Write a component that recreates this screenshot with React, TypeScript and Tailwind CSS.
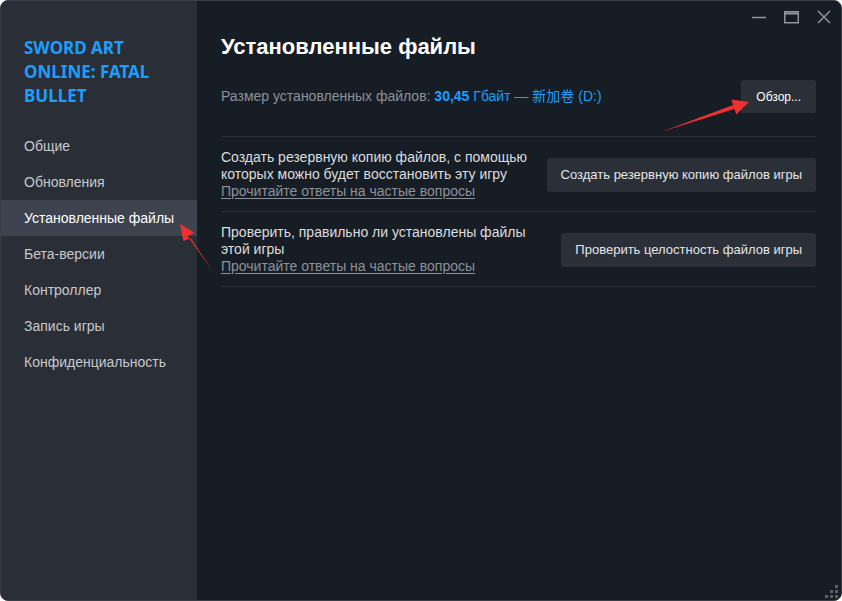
import React from "react";

const navItems = [
  "Общие",
  "Обновления",
  "Установленные файлы",
  "Бета-версии",
  "Контроллер",
  "Запись игры",
  "Конфиденциальность",
];

// Steam-style window control glyphs
function WindowControls() {
  return (
    <div className="flex h-[32px] items-center justify-end gap-[18px] pr-[10px] text-[#8f959c]">
      <svg width="14" height="14" viewBox="0 0 14 14">
        <line x1="0" y1="7.5" x2="14" y2="7.5" stroke="currentColor" strokeWidth="1.5" />
      </svg>
      <svg width="15" height="14" viewBox="0 0 15 14">
        <rect x="0.75" y="1.75" width="13.5" height="11" fill="none" stroke="currentColor" strokeWidth="1.5" />
        <line x1="0.75" y1="3.5" x2="14.25" y2="3.5" stroke="currentColor" strokeWidth="2" />
      </svg>
      <svg width="14" height="14" viewBox="0 0 14 14">
        <path d="M1 1 L13 13 M13 1 L1 13" stroke="currentColor" strokeWidth="1.5" />
      </svg>
    </div>
  );
}

function ActionRow({ text, button }: { text: string[]; button: string }) {
  return (
    <div className="flex items-center justify-between border-b border-[#2c313a] pb-[11px] pt-[12px]">
      <div className="whitespace-nowrap text-[14px] leading-[17px] text-[#dcdedf]">
        {text.map((t) => (
          <div key={t}>{t}</div>
        ))}
        <a className="text-[#8b929a] underline underline-offset-[2px]">Прочитайте ответы на частые вопросы</a>
      </div>
      <button className="h-[34px] shrink-0 whitespace-nowrap rounded-[3px] bg-[#2b2f38] px-[14px] text-[13px] text-[#e4e6e8]">
        {button}
      </button>
    </div>
  );
}

export default function App() {
  return (
    <div
      className="relative flex h-[601px] w-[842px] overflow-hidden rounded-[8px] border border-[#3a3e46] bg-[#171d25]"
      style={{ fontFamily: '"Liberation Sans", Arial, "Noto Sans CJK SC", sans-serif' }}
    >
      {/* Sidebar */}
      <div className="w-[196px] shrink-0 bg-[#2a2e37] pt-[35px]">
        <div className="px-[23px] text-[17px] font-bold leading-[24px] text-[#1a9fff]" style={{ fontFamily: '"Noto Sans", sans-serif' }}>
          SWORD ART
          <br />
          ONLINE: FATAL
          <br />
          BULLET
        </div>
        <div className="mt-[20px]">
          {navItems.map((item) => (
            <div
              key={item}
              className={`flex h-[36px] items-center whitespace-nowrap px-[23px] text-[14px] ${
                item === "Установленные файлы" ? "bg-[#3d4450] text-white" : "text-[#c7cacd]"
              }`}
            >
              {item}
            </div>
          ))}
        </div>
      </div>

      {/* Main content */}
      <div className="flex-1">
        <WindowControls />
        <div className="pl-[24px] pr-[25px]">
          <h1 className="text-[22px] font-bold leading-[28px] text-white">Установленные файлы</h1>
          <div className="mt-[19px] flex items-center justify-between border-b border-[#2c313a] pb-[23px]">
            <div className="text-[14px] text-[#8b929a]">
              Размер установленных файлов:{" "}
              <span className="font-bold text-[#1a9fff]">30,45</span>
              <span className="text-[#1a9fff]"> Гбайт — 新加卷 (D:)</span>
            </div>
            <button className="h-[33px] rounded-[3px] bg-[#2b2f38] px-[15px] text-[12px] text-white">Обзор...</button>
          </div>
          <ActionRow
            text={["Создать резервную копию файлов, с помощью", "которых можно будет восстановить эту игру"]}
            button="Создать резервную копию файлов игры"
          />
          <ActionRow
            text={["Проверить, правильно ли установлены файлы", "этой игры"]}
            button="Проверить целостность файлов игры"
          />
        </div>
      </div>

      {/* Resize grip */}
      <svg className="absolute bottom-[2px] right-[2px]" width="14" height="14" viewBox="0 0 14 14" fill="#5b616a">
        <rect x="10" y="1" width="3" height="3" />
        <rect x="5" y="6" width="3" height="3" />
        <rect x="10" y="6" width="3" height="3" />
        <rect x="0" y="11" width="3" height="3" />
        <rect x="5" y="11" width="3" height="3" />
        <rect x="10" y="11" width="3" height="3" />
      </svg>

      {/* Annotation arrows */}
      <svg className="pointer-events-none absolute left-0 top-0" width="842" height="601">
        <polygon points="660,131 732.2,104.1 730.3,98.4 748,101 735.3,113.6 733.4,107.9" fill="#f0302e" />
        <polygon points="213,272 189.8,237.3 182.4,240.1 179,223 193.8,232.1 186.5,235" fill="#f0302e" />
      </svg>
    </div>
  );
}
